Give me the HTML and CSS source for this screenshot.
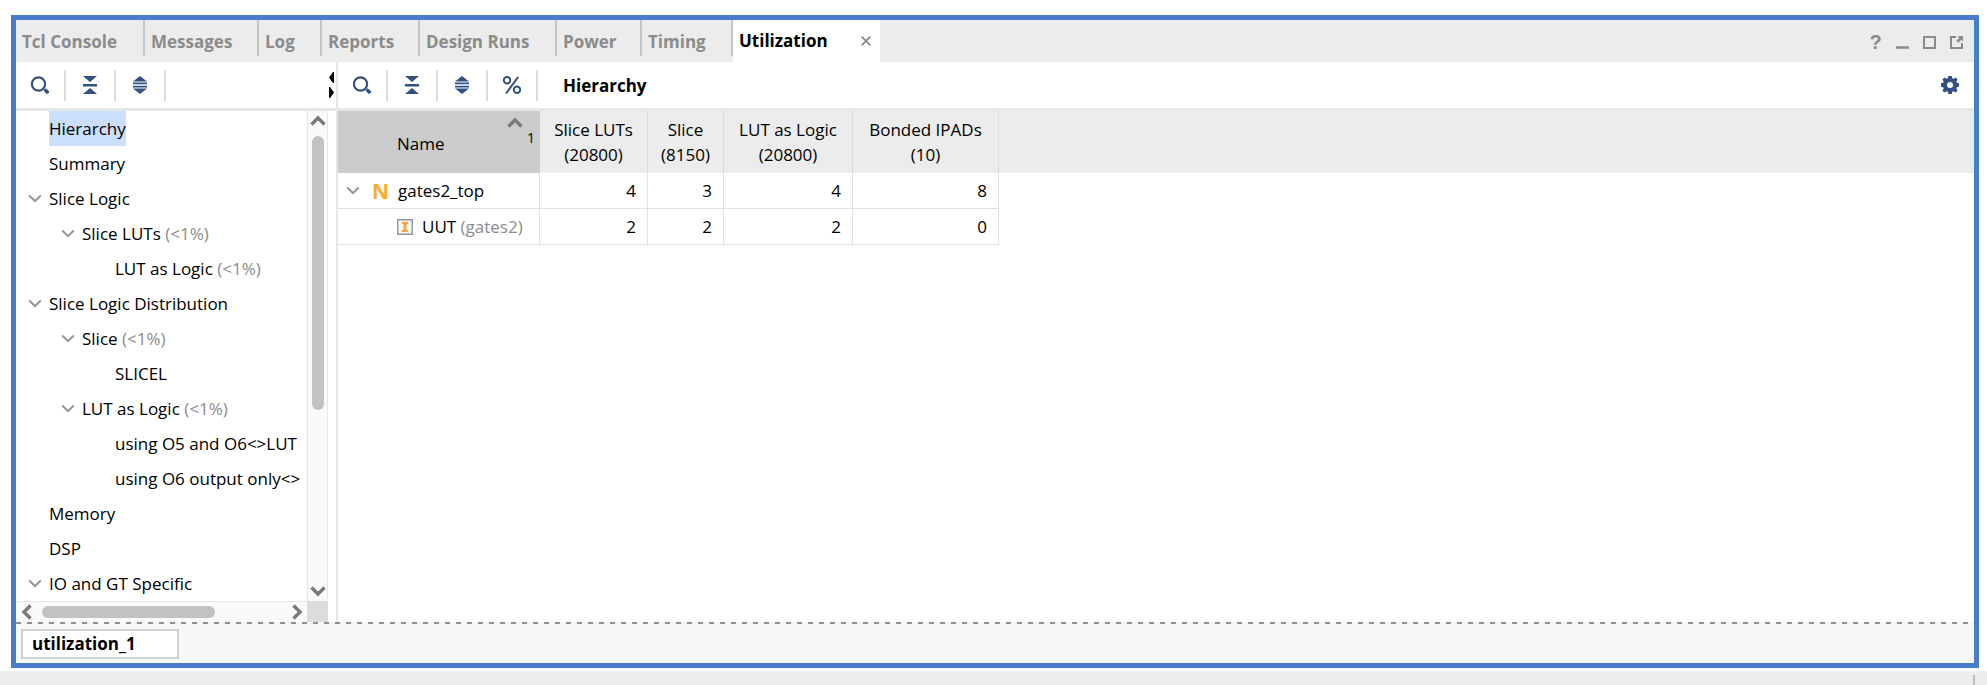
FILE: index.html
```html
<!DOCTYPE html>
<html lang="en">
<head>
<meta charset="utf-8">
<title>Utilization</title>
<link rel="stylesheet" href="styles.css">
</head>
<body>
<svg class="defs" aria-hidden="true">
  <symbol id="search" viewBox="0 0 20 20"><circle cx="8.5" cy="9" r="6.6" fill="none" stroke="currentColor" stroke-width="2.2"/><path d="M13.5 15.2l2-2 3.5 2.8q.6 3-3 2.6z" fill="currentColor"/></symbol>
  <symbol id="collapse" viewBox="0 0 20 20"><path d="M3 1h14l-7 6zM3 19h14l-7-6zM3 9h14v2.4H3z" fill="currentColor"/></symbol>
  <symbol id="expand" viewBox="0 0 20 20"><path d="M3 6.500l7-5.500 7 5.500zM3 13.500l7 5.500 7-5.500z" fill="currentColor"/><path d="M3 7.500h14v1.700H3zM3 10.800h14v1.700H3z" fill="currentColor"/></symbol>
  <symbol id="percent" viewBox="0 0 20 20"><g fill="none" stroke="currentColor" stroke-width="2"><circle cx="5" cy="5.2" r="3.2"/><circle cx="15" cy="14.8" r="3.2"/><path d="M16.2 2L4 18.5"/></g></symbol>
  <symbol id="gear" viewBox="0 0 20 20"><path fill="currentColor" fill-rule="evenodd" d="M8.300 1h3.400l.5 2.200 1.300.5L15.600 2.400l2 2-1.300 2.100.5 1.300L19 8.300v3.400l-2.200.5-.5 1.300 1.300 2.100-2 2-2.100-1.300-1.300.5L11.700 19H8.300l-.5-2.200-1.300-.5-2.100 1.300-2-2 1.300-2.100-.5-1.300L1 11.700V8.300l2.200-.5.500-1.300L2.400 4.400l2-2 2.100 1.300 1.300-.5zM10 7a3 3 0 100 6 3 3 0 000-6z"/></symbol>
  <symbol id="chev" viewBox="0 0 14 10"><path d="M1.200 1.500L7 7l5.800-5.500" fill="none" stroke="currentColor" stroke-width="2"/></symbol>
  <symbol id="arrow" viewBox="0 0 16 12"><path d="M1.500 9.500L8 3l6.500 6.500" fill="none" stroke="currentColor" stroke-width="3.400"/></symbol>
</svg>
<main class="frame">
  <nav class="tabs" aria-label="Panels">
    <button class="tab">Tcl Console</button>
    <button class="tab">Messages</button>
    <button class="tab">Log</button>
    <button class="tab">Reports</button>
    <button class="tab">Design Runs</button>
    <button class="tab">Power</button>
    <button class="tab">Timing</button>
    <div class="tab-active"><button class="tab-label">Utilization</button><button class="close" aria-label="Close"><svg width="10" height="10" viewBox="0 0 10 10"><path d="M.7.7l8.600 8.600M9.300.7L.7 9.300" stroke="currentColor" stroke-width="1.800"/></svg></button></div>
    <div class="window-tools">
      <button class="tool help" aria-label="Help">?</button>
      <button class="tool" aria-label="Minimize"><svg width="13" height="13" viewBox="0 0 13 13"><path d="M0 11.500h13" stroke="currentColor" stroke-width="2.500"/></svg></button>
      <button class="tool" aria-label="Maximize"><svg width="13" height="13" viewBox="0 0 13 13"><path d="M1 1h11v11H1z" fill="none" stroke="currentColor" stroke-width="2"/></svg></button>
      <button class="tool" aria-label="Float"><svg width="13" height="13" viewBox="0 0 13 13"><path d="M6 1H1v11h11V7" fill="none" stroke="currentColor" stroke-width="2"/><path d="M7.500 0H13v5.500l-1.700-1.700-3 3-2-2 3-3z" fill="currentColor"/></svg></button>
    </div>
  </nav>
  <div class="panes">
    <section class="side">
      <div class="toolbar">
        <button class="icon" aria-label="Search"><svg><use href="#search"/></svg></button>
        <button class="icon" aria-label="Collapse all"><svg><use href="#collapse"/></svg></button>
        <button class="icon" aria-label="Expand all"><svg><use href="#expand"/></svg></button>
        <button class="splitter" aria-label="Toggle side pane"><svg width="5" height="26" viewBox="0 0 5 26"><path d="M5 0v11H4L0 5.500 4 0zM0 15h1l4 5.500L1 26H0z"/></svg></button>
      </div>
      <div class="scroll">
        <ul class="tree">
          <li><span class="selected">Hierarchy</span></li>
          <li>Summary</li>
          <li><svg class="chev"><use href="#chev"/></svg>Slice Logic</li>
          <li class="l2"><svg class="chev"><use href="#chev"/></svg>Slice LUTs <span class="dim">(&lt;1%)</span></li>
          <li class="l3">LUT as Logic <span class="dim">(&lt;1%)</span></li>
          <li><svg class="chev"><use href="#chev"/></svg>Slice Logic Distribution</li>
          <li class="l2"><svg class="chev"><use href="#chev"/></svg>Slice <span class="dim">(&lt;1%)</span></li>
          <li class="l3">SLICEL</li>
          <li class="l2"><svg class="chev"><use href="#chev"/></svg>LUT as Logic <span class="dim">(&lt;1%)</span></li>
          <li class="l3">using O5 and O6&lt;&gt;LUT</li>
          <li class="l3">using O6 output only&lt;&gt;</li>
          <li>Memory</li>
          <li>DSP</li>
          <li><svg class="chev"><use href="#chev"/></svg>IO and GT Specific</li>
        </ul>
        <div class="vbar"><svg class="arrow"><use href="#arrow"/></svg><div class="vtrack"><div class="vthumb"></div></div><svg class="arrow down"><use href="#arrow"/></svg></div>
        <div class="hbar"><svg class="arrow left"><use href="#arrow"/></svg><div class="htrack"><div class="hthumb"></div></div><svg class="arrow right"><use href="#arrow"/></svg></div>
        <div class="corner"></div>
      </div>
    </section>
    <section class="content">
      <div class="toolbar">
        <button class="icon" aria-label="Search"><svg><use href="#search"/></svg></button>
        <button class="icon" aria-label="Collapse all"><svg><use href="#collapse"/></svg></button>
        <button class="icon" aria-label="Expand all"><svg><use href="#expand"/></svg></button>
        <button class="icon" aria-label="Show percentage"><svg><use href="#percent"/></svg></button>
        <h1 class="title">Hierarchy</h1>
        <button class="icon settings" aria-label="Settings"><svg><use href="#gear"/></svg></button>
      </div>
      <div class="table-area">
        <table class="grid">
          <colgroup><col class="c-name"><col class="c-luts"><col class="c-slice"><col class="c-logic"><col class="c-pads"></colgroup>
          <thead><tr>
            <th class="sorted"><div class="sort-head"><span class="name">Name</span><svg class="arrow"><use href="#arrow"/></svg><span class="order">1</span></div></th>
            <th>Slice LUTs<br>(20800)</th><th>Slice<br>(8150)</th><th>LUT as Logic<br>(20800)</th><th>Bonded IPADs<br>(10)</th>
          </tr></thead>
          <tbody>
            <tr><td><div class="cell"><svg class="chev"><use href="#chev"/></svg><b class="netlist">N</b>gates2_top</div></td><td>4</td><td>3</td><td>4</td><td>8</td></tr>
            <tr><td><div class="cell child"><svg class="inst" width="16" height="16" viewBox="0 0 16 16"><path d="M.7.7h14.600v14.600H.7z" fill="#f4f4f4" stroke="#8f979b" stroke-width="1.400"/><path d="M5 3h6v2H9.500v6H11v2H5v-2h1.500V5H5z" fill="#fba33c"/></svg>UUT&nbsp;<span class="dim">(gates2)</span></div></td><td>2</td><td>2</td><td>2</td><td>0</td></tr>
          </tbody>
        </table>
      </div>
    </section>
  </div>
  <footer class="reports"><button class="report">utilization_1</button></footer>
</main>
<div class="status"><span class="grip"></span></div>
</body>
</html>
```
FILE: styles.css
```css
* { box-sizing: border-box; }
body {
  margin: 0;
  height: 100vh;
  padding-top: 15px;
  display: flex;
  flex-direction: column;
  background: #fff;
  color: #000;
  font: 17px/24px "Open Sans", "Noto Sans", sans-serif;
}
button {
  margin: 0;
  padding: 0;
  border: 0;
  background: none;
  font: inherit;
  color: inherit;
}
svg { display: block; flex: none; }
.defs { position: absolute; width: 0; height: 0; }

.frame {
  flex: 1;
  min-height: 0;
  margin: 0 8px 3px 11px;
  border: 5px solid #487ccf;
  display: flex;
  flex-direction: column;
}

.tabs {
  height: 42px;
  flex: none;
  display: grid;
  grid-template-columns: 129px 114px 63px 98px 137px 85px 91px 147px 1fr;
  background: #ececec;
  font-weight: 700;
  color: #8b8b8b;
}
.tab {
  height: 36px;
  padding: 7px 0 0 6px;
  border-right: 2px solid #c4c4c4;
  text-align: left;
  white-space: nowrap;
}
.tab-active {
  display: flex;
  align-items: center;
  justify-content: space-between;
  padding: 0 9px 0 6px;
  background: #fff;
}
.tab-label { color: #000; }
.close { color: #8b8b8b; }
.window-tools {
  display: flex;
  align-items: center;
  justify-content: flex-end;
  gap: 14px;
  padding: 2px 11px 0 0;
}
.tool { min-width: 13px; }
.help { font: 700 20px/20px "Liberation Sans", sans-serif; }

.panes { flex: 1; min-height: 0; display: flex; }
.side {
  width: 322px;
  flex: none;
  display: flex;
  flex-direction: column;
  border-right: 2px solid #e6e6e6;
}
.content { flex: 1; min-width: 0; }

.toolbar {
  height: 49px;
  flex: none;
  display: flex;
  align-items: center;
  border-bottom: 3px solid #e6e6e6;
}
.icon {
  width: 50px;
  height: 31px;
  display: grid;
  place-items: center;
  border-right: 2px solid #dcdcdc;
  color: #335082;
}
.icon svg { width: 20px; height: 20px; }
.settings { width: 48px; margin-left: auto; border: 0; }
.splitter { margin: 0 2px 0 auto; }
.title { margin: 2px 0 0 25px; font-size: 17px; font-weight: 700; }

.scroll {
  flex: 1;
  min-height: 0;
  margin-right: 8px;
  display: grid;
  grid-template: 1fr 21px / 1fr 21px;
}
.tree {
  margin: 0;
  padding: 0;
  list-style: none;
  overflow: hidden;
}
.tree li {
  height: 35px;
  padding-left: 33px;
  display: flex;
  align-items: center;
  white-space: pre;
}
.tree .l2 { padding-left: 66px; }
.tree .l3 { padding-left: 99px; }
.tree .chev { margin-left: -21px; }
.selected { padding: 6px 0 5px; background: #cbdefe; }
.chev { width: 14px; height: 10px; margin-right: 7px; color: #979797; }
.dim { color: #8c8c8c; }

.vbar, .hbar { display: flex; align-items: center; background: #fafafa; color: #7b7b7b; }
.vbar { flex-direction: column; border: solid #e6e6e6; border-width: 0 1px; padding: 4px 0; }
.hbar { border-top: 1px solid #e6e6e6; padding: 0 2px 0 3px; }
.corner { background: #dcdcdc; }
.arrow { width: 16px; height: 12px; }
.down { transform: rotate(180deg); }
.left { transform: rotate(-90deg); }
.right { transform: rotate(90deg); }
.vtrack { flex: 1; width: 12px; padding: 9px 0 7px; }
.vthumb { height: 62%; border-radius: 6px; background: #c2c2c2; }
.htrack { flex: 1; padding: 0 7px; }
.hthumb { width: 72%; height: 12px; border-radius: 6px; background: #c2c2c2; }

.table-area { background: linear-gradient(#ececec 62px, #fff 62px); }
.grid { width: 661px; table-layout: fixed; border-collapse: separate; border-spacing: 0; }
.c-name { width: 202px; }
.c-luts { width: 108px; }
.c-slice { width: 76px; }
.c-logic { width: 129px; }
.c-pads { width: 146px; }
.grid th {
  height: 62px;
  padding: 0;
  border-right: 1px solid #dcdcdc;
  font-weight: 400;
  line-height: 25px;
  white-space: nowrap;
}
.grid .sorted { background: #cbcbcb; border-color: #cbcbcb; }
.sort-head { height: 62px; display: flex; padding: 0 4px 0 59px; }
.name { margin: 20px auto 0 0; }
.sort-head .arrow { margin-top: 6px; color: #7b7b7b; }
.order { margin: 17px 0 0 4px; font-size: 14px; line-height: 20px; }
.grid td {
  height: 36px;
  padding: 0 11px 0 0;
  border: solid #e2e2e2;
  border-width: 0 1px 1px 0;
  text-align: right;
}
.cell { display: flex; align-items: center; padding-left: 8px; white-space: nowrap; }
.grid td:first-child { padding-right: 0; }
.netlist { width: 18px; margin: 0 9px 0 4px; color: #fba930; font-size: 21px; line-height: 24px; }
.child { padding-left: 59px; }
.inst { margin-right: 9px; }

.reports {
  height: 41px;
  flex: none;
  padding: 7px 5px 0;
  background: repeating-linear-gradient(90deg, #8f8f8f 0 5px, #f7f7f7 5px 11px) top / 100% 2px no-repeat #f7f7f7;
}
.report {
  width: 158px;
  height: 30px;
  padding-left: 9px;
  border: 2px solid #d2d2d2;
  background: #fff;
  text-align: left;
  font-weight: 700;
}
.status {
  height: 14px;
  flex: none;
  padding: 4px 12px 0 0;
  display: flex;
  justify-content: flex-end;
  background: #eee;
}
.grip { width: 2px; background: #bdbdbd; }
```
